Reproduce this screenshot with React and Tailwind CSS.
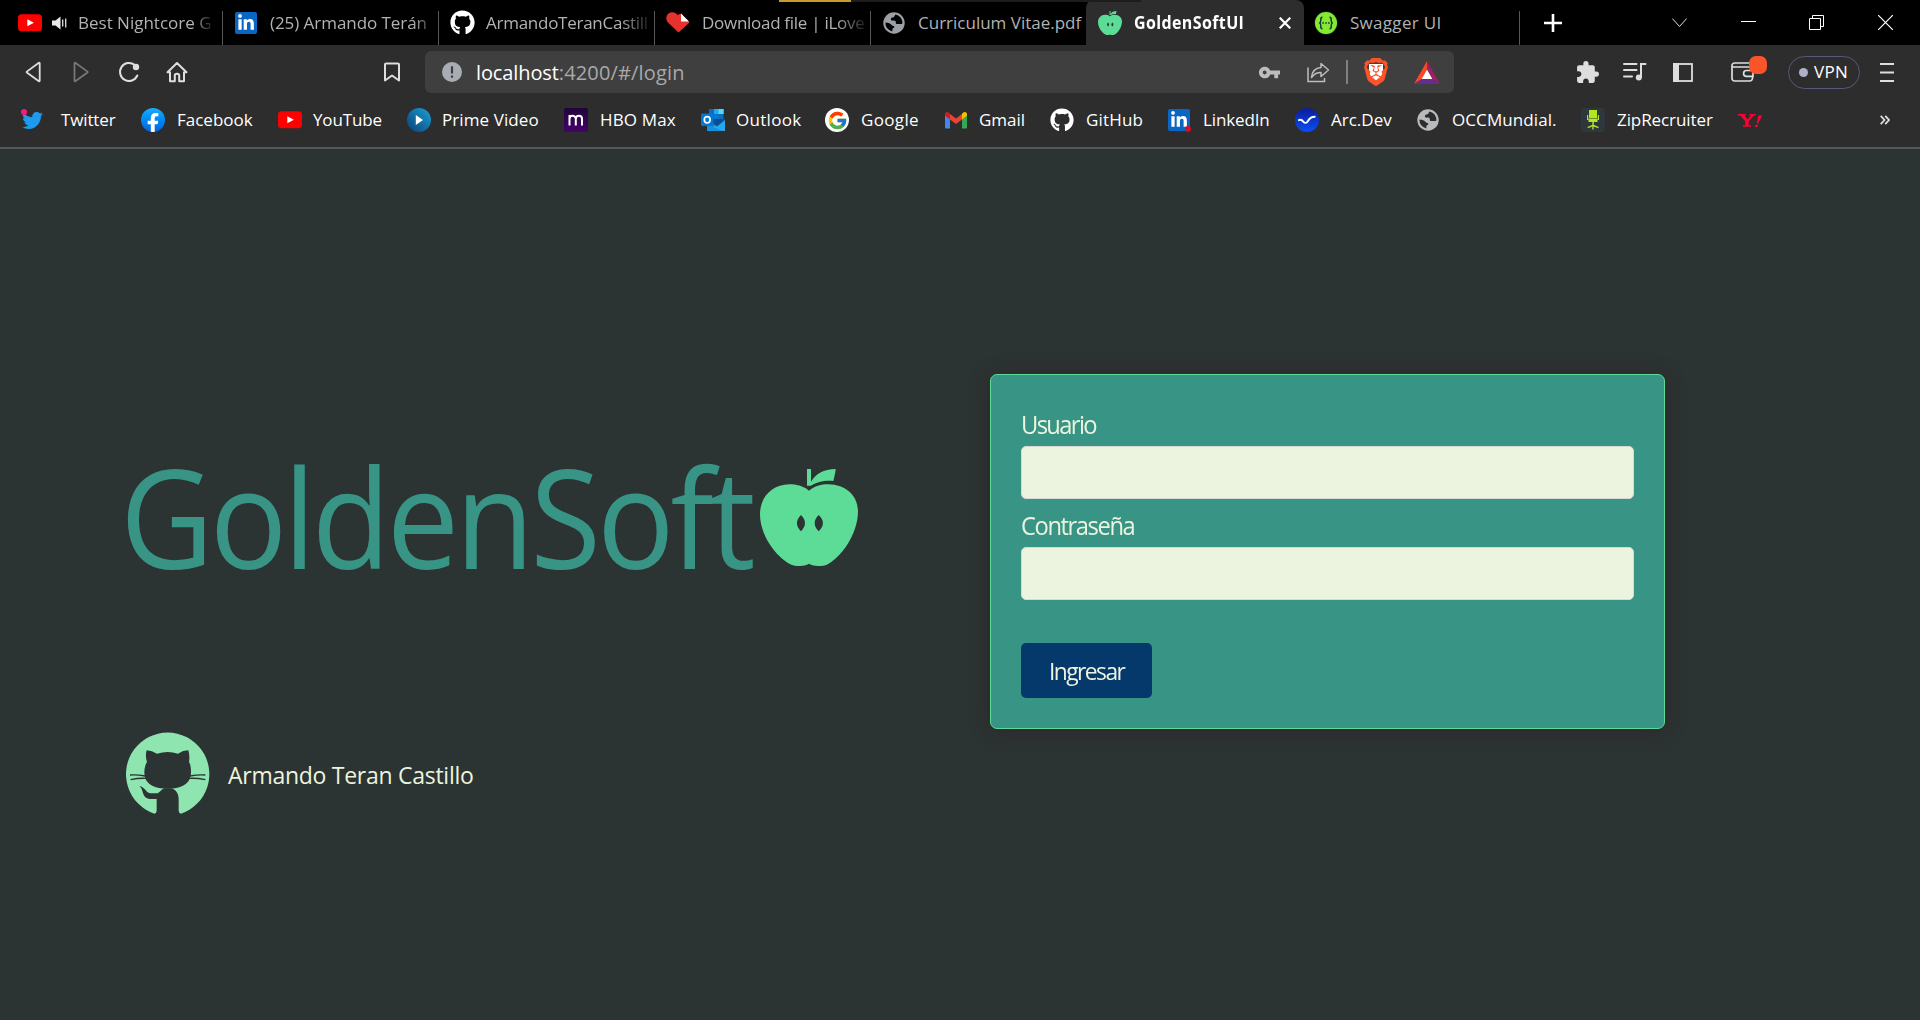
import { useLayoutEffect, useRef, useState } from "react";
import { FaGithub, FaLinkedinIn, FaFacebookF, FaTwitter } from "react-icons/fa";
import { FcGoogle } from "react-icons/fc";
import { SiBrave } from "react-icons/si";
import { MdExtension, MdVpnKey } from "react-icons/md";

/* Text whose tracking is adjusted so that it fills a given width; `s` condenses the glyphs. */
function Fit({ w, s = 1, className = "", children }) {
  const ref = useRef(null);
  const [spacing, setSpacing] = useState(0);
  useLayoutEffect(() => {
    const width = ref.current.offsetWidth;
    setSpacing((w / s - width) / String(children).length);
  }, []);
  const condensed = s === 1 ? {} : { transform: `scaleX(${s})`, marginRight: w - w / s };
  return (
    <span ref={ref} className={`inline-block origin-left whitespace-pre ${className}`} style={{ letterSpacing: spacing, ...condensed }}>
      {children}
    </span>
  );
}

/* ---------- brand icons ---------- */
const YouTube = () => (
  <svg width="24" height="24" viewBox="0 0 24 24">
    <rect x="0" y="3.3" width="24" height="17" rx="3.6" fill="#f00" />
    <path d="M9.3 8.3v7l6.6-3.5z" fill="#fff" />
  </svg>
);
const LinkedIn = ({ dot }) => (
  <span className="relative grid h-[22px] w-[22px] place-items-center rounded-[2px] bg-[#0a66c2] text-white">
    <FaLinkedinIn size={18} />
    {dot && <span className="absolute -bottom-px -right-px h-1.5 w-1.5 rounded-full bg-[#d11124]" />}
  </span>
);
const Globe = ({ color = "#9aa0a6", hole = "#000" }) => (
  <svg width="22" height="22" viewBox="0 0 22 22">
    <circle cx="11" cy="11" r="10.7" fill={color} />
    <path d="M12.7 2.4c-1.5 1-.7 2.1-2.2 2.8-1.4.6-2.4.4-2.6 1.9-.2 1.3 1 1.7 2.6 1.5 1.8-.2 2.4.7 2.3 2.2 0 1.4 1.2 1.3 2.4 1.2 1.8-.2 2.6.4 4.1-.2A8.6 8.6 0 0 0 12.7 2.4z" fill={hole} />
    <path d="M2.4 10.5c1.8.2 3.4.3 4.8 1.2 1.5 1 1.7 2 3.4 2.4 1.3.4 1 1.6-.2 2-1.2.3-1 1.400-1 3.300A8.600 8.600 0 0 1 2.400 10.500z" fill={hole} />
  </svg>
);
const Apple = ({ hole, w, h }) => (
  <svg width={w} height={h} viewBox="780 87 294 291" preserveAspectRatio="none" className="shrink-0">
    <path d="M927 152C908 137 889 133 868 133C815 134 780 172 780 223C780 290 834 356 876 375C891 380 913 379 927 371C941 379 963 380 979 375C1021 355 1074 285 1074 213C1073 166 1037 134 985 133C963 133 944 138 927 152Z" fill="#5cdc96" />
    <path d="M921 87H933V125C947 102 970 87 1007 87L1006 97L1000 123C970 121 952 127 933 137H921Z" fill="#5cdc96" />
    <path d="M903 225C919 241 919 258 903 274C887 258 887 241 903 225ZM956 225C973 241 973 258 956 274C940 258 940 241 956 225Z" fill={hole} />
  </svg>
);
const Heart = () => (
  <svg width="24" height="21" viewBox="0 0 24 21">
    <path d="M12.500 20.500L2 10.500C-.5 8 0 3.500 2.500 1.600 5.500-.6 9.500.2 11.500 3L15 1.500l8.500 9z" fill="#e5322d" />
    <path d="M15 1.500V9.500h8z" fill="#fff" />
  </svg>
);
const Swagger = () => (
  <svg width="24" height="24" viewBox="0 0 24 24">
    <circle cx="12" cy="12" r="11.500" fill="#173647" />
    <circle cx="12" cy="12" r="11" fill="#85ea2d" />
    <path d="M8.500 6.300C6.500 6.300 6.800 8 6.800 9.500S6.300 11.800 5.300 12c1 .2 1.500 1 1.500 2.500s-.3 3.200 1.700 3.200M15.500 6.300c2 0 1.700 1.700 1.700 3.200s.5 2.300 1.500 2.500c-1 .2-1.500 1-1.500 2.500s.3 3.200-1.700 3.200" fill="none" stroke="#173647" strokeWidth="1.500" />
    <path d="M8.300 12h1.600M11.200 12h1.600M14.100 12h1.600" stroke="#173647" strokeWidth="1.600" />
  </svg>
);
const Twitter = () => (
  <span className="relative block h-6 w-6 pt-[2px]">
    <FaTwitter size={21} className="ml-[2px] text-[#1d9bf0]" />
    <span className="absolute left-px top-[1px] h-1.5 w-1.5 rounded-full bg-[#f9197f]" />
  </span>
);
const Facebook = () => (
  <span className="flex h-6 w-6 items-end justify-center overflow-hidden rounded-full bg-linear-to-b from-[#19aeff] to-[#0062e0] text-white">
    <FaFacebookF size={20} className="mb-[-1px]" />
  </span>
);
const Prime = () => (
  <span className="grid h-6 w-6 place-items-center rounded-full bg-linear-to-tr from-[#0c3f77] to-[#1fa3d4]">
    <svg width="8" height="10" viewBox="0 0 8 10"><path d="M.8 0v10L8 5z" fill="#fff" /></svg>
  </span>
);
const Hbo = () => (
  <span className="grid h-6 w-6 place-items-center rounded-[2px] bg-linear-to-b from-[#21043a] to-[#43036b]">
    <svg width="16" height="12" viewBox="0 0 16 12">
      <path d="M1.500 11.500V1M1.500 5C1.500 .8 7.800 .8 7.800 5v6.500M7.800 5c0-4.200 6.200-4.200 6.200 0v6.500" fill="none" stroke="#fff" strokeWidth="2" />
    </svg>
  </span>
);
const Outlook = () => (
  <svg width="24" height="22" viewBox="0 0 24 22">
    <path d="M8 0h14.500v10H8z" fill="#0f6cbd" />
    <path d="M13 0h9.500v5H13z" fill="#28a8ea" />
    <path d="M17.500 0h5v5h-5z" fill="#50d9ff" />
    <path d="M13 5h4.500v5H13z" fill="#0078d4" />
    <path d="M6 10l18 0v12H6z" fill="#1490df" />
    <path d="M24 10L12 18l10 4h2z" fill="#28a8ea" />
    <path d="M6 10l10 7.500L24 11v-1z" fill="#0a4f94" />
    <rect x="0" y="4.500" width="12.500" height="12.500" rx="1" fill="#0078d4" />
    <ellipse cx="6.200" cy="10.800" rx="2.900" ry="3.200" fill="none" stroke="#fff" strokeWidth="1.700" />
  </svg>
);
const Google = () => (
  <span className="grid h-6 w-6 place-items-center rounded-full bg-white"><FcGoogle size={21} /></span>
);
const Gmail = () => (
  <svg width="24" height="18" viewBox="0 0 24 18">
    <path d="M1 4v12.500c0 .8.500 1 1 1h4V8z" fill="#4285f4" />
    <path d="M23 4v12.500c0 .8-.5 1-1 1h-4V8z" fill="#34a853" />
    <path d="M6 3l6 4.600L18 3v5.500l-6 4.500-6-4.500z" fill="#ea4335" />
    <path d="M1 3.500C1 .8 3.500 .5 4.700 1.600L6 2.800V8.500L1 4.800z" fill="#c5221f" />
    <path d="M23 3.500c0-2.700-2.500-3-3.700-1.900L18 2.800V8.500l5-3.700z" fill="#fbbc04" />
  </svg>
);
const Arc = () => (
  <span className="grid h-6 w-6 place-items-center rounded-full bg-linear-to-b from-[#0a1a9c] to-[#0a4ff5]">
    <svg width="18" height="10" viewBox="0 0 18 10">
      <path d="M0 5.500c3-1.800 4.500 0 5.500 1.300C6.800 8.300 8.500 8.300 9.600 6.500 11.500 3 14 1.500 17.500 1.800" fill="none" stroke="#fff" strokeWidth="1.900" />
    </svg>
  </span>
);
const Zip = () => (
  <span className="grid h-6 w-6 place-items-center rounded-[3px] bg-[#2d373c]">
    <svg width="12" height="20" viewBox="0 0 12 20">
      <path d="M2 0h8v8H2zM0 5h1.200v5H0zM10.800 5H12v5h-1.200zM1.500 8.500h9V12h-9zM5.300 12h1.500v4H5.300zM.5 17l5-2.200h1.200l5 2.200-.5 1.200-4.500-1.700v3H5.300v-3L1 18.200z" fill="#b2e522" />
    </svg>
  </span>
);
const Yahoo = () => (
  <svg width="24" height="14" viewBox="0 0 24 14" fill="#ff0033" className="ml-px mt-[2px]">
    <path d="M0 0h7.600v1.500H6.500l3.100 4L13 1.500h-1.600V0h6.300v1.500h-1.800L10.700 7.300v4h2.300v1.500H5v-1.500h2.300V7.300L2.300 1.500H0z" />
    <path d="M20.300 1.500h4L20 9.500h-1.200zM17.500 10.700h2.700l-.8 2.300h-2.700z" />
  </svg>
);

/* ---------- tab strip ---------- */
function Tab({ icon, lead = "w-[66px]", pad = "pl-3", w, text, fade, children }) {
  return (
    <div className={`flex h-[45px] w-[216px] shrink-0 items-end ${pad}`}>
      <div className="flex h-full min-w-0 flex-1 items-center">
        <div className={`flex shrink-0 items-center ${lead}`}>{icon}{children}</div>
        <div className={`flex-1 ${fade || ""}`}>
          <Fit w={w}>{text}</Fit>
        </div>
      </div>
      <div className="h-[34px] w-px bg-[#585858]" />
    </div>
  );
}

function TabStrip() {
  return (
    <div className="relative flex h-[45px] items-center bg-black text-[17px] leading-6 text-[#b1b2b4]">
      <div className="absolute left-[779px] top-0 h-0.5 w-[72px] bg-[#c99a2e]" />
      <div className="absolute left-[851px] top-0 h-0.5 w-[290px] bg-[#1d1d1d]" />
      <div className="w-[7px]" />
      <Tab icon={<YouTube />} pad="pl-[11px]" lead="w-[60px]" w={134} text="Best Nightcore G" fade="mask-r-from-80% mask-r-to-95%">
        <svg width="15" height="14" viewBox="0 0 15 14" className="ml-[10px]">
          <path d="M0 4.500h3.500L8.500.5v13L3.500 9.500H0z" fill="#e8e8e8" />
          <path d="M10.700 3.500v7M13.700 2.500v9" stroke="#d0d0d0" strokeWidth="1.400" />
        </svg>
      </Tab>
      <Tab icon={<LinkedIn />} pad="pl-[12px]" lead="w-[35px]" w={157} text="(25) Armando Terán" fade="mask-r-from-85% mask-r-to-100%" />
      <Tab icon={<FaGithub size={25} className="text-white" />} pad="pl-[11px]" lead="w-[36px]" w={162} text="ArmandoTeranCastill" fade="mask-r-from-80% mask-r-to-100%" />
      <Tab icon={<Heart />} pad="pl-[11px]" lead="w-[36px]" w={162} text="Download file | iLove" fade="mask-r-from-80% mask-r-to-100%" />
      <div className="flex h-[45px] w-[215px] shrink-0 items-center pl-[12px]">
        <div className="w-[35px]"><Globe /></div>
        <Fit w={163}>Curriculum Vitae.pdf</Fit>
      </div>
      <div className="flex h-[45px] w-[218px] shrink-0 items-center rounded-t-lg bg-[#2d2d2d] pl-3 font-bold text-white">
        <div className="w-[36px]"><Apple w="24" h="24" hole="#2d2d2d" /></div>
        <Fit w={110} s={0.94}>GoldenSoftUI</Fit>
        <svg width="12" height="12" viewBox="0 0 12 12" className="ml-[35px]">
          <path d="M.7.7l10.600 10.600M11.300.7L.7 11.300" stroke="#fff" strokeWidth="2.200" />
        </svg>
      </div>
      <Tab icon={<Swagger />} pad="pl-[10px]" lead="w-[36px]" w={91} text="Swagger UI" />
      <svg width="18" height="18" viewBox="0 0 18 18" className="ml-[24px] shrink-0">
        <path d="M9 0v18M0 9h18" stroke="#fff" strokeWidth="2.600" />
      </svg>
      <div className="ml-auto flex shrink-0 items-center [&>svg]:mx-[26.850px]">
        <svg width="15" height="15" viewBox="0 0 15 15" fill="none" stroke="#ddd"><path d="M.3 3.500l7.200 8 7.200-8" /></svg>
        <svg width="15" height="15" viewBox="0 0 15 15" fill="none" stroke="#fff"><path d="M0 6.500h15" /></svg>
        <svg width="15" height="15" viewBox="0 0 15 15" fill="none" stroke="#fff"><path d="M.5 3.500h11v11H.5zM3.500 3.500v-3h11v11h-3" /></svg>
        <svg width="15" height="15" viewBox="0 0 15 15" fill="none" stroke="#fff" strokeWidth="1.200"><path d="M0 0l15 15M15 0L0 15" /></svg>
      </div>
    </div>
  );
}

/* ---------- navigation bar ---------- */
function NavBar() {
  return (
    <div className="flex h-[54px] items-center text-[#dedede]">
      <div className="flex pl-[9px] [&>svg]:mx-3 [&>svg]:h-6 [&>svg]:w-6">
        <svg viewBox="0 0 24 24" fill="none" stroke="currentColor" strokeWidth="1.800" strokeLinejoin="round"><path d="M18.700 3v18l-.8.300L5.800 12.400a.5.5 0 0 1 0-.8L17.900 2.700z" /></svg>
        <svg viewBox="0 0 24 24" fill="none" stroke="#777" strokeWidth="1.800" strokeLinejoin="round"><path d="M5.500 3v18l.8.300L18.500 12.400a.5.5 0 0 0 0-.8L6.300 2.700z" /></svg>
        <svg viewBox="0 0 24 24"><path d="M20.300 15.500A9 9 0 1 1 17.500 4.800" fill="none" stroke="currentColor" strokeWidth="2" strokeLinecap="round" /><circle cx="19" cy="7" r="3.200" fill="currentColor" /></svg>
        <svg viewBox="0 0 24 24" fill="none" stroke="currentColor" strokeWidth="2" strokeLinejoin="round"><path d="M12 3L2.500 12.300H5V21.300H9.800V15.500c0-2.500 4.400-2.500 4.400 0V21.300H19V12.300h2.500z" /></svg>
      </div>
      <svg width="18" height="20" viewBox="0 0 18 20" fill="none" stroke="currentColor" strokeWidth="2" strokeLinejoin="round" className="ml-[182px]">
        <path d="M2 2.500a1 1 0 0 1 1-1h12a1 1 0 0 1 1 1V18.500l-7-5-7 5z" />
      </svg>
      <div className="ml-[24px] flex h-[42px] w-[1029px] shrink-0 items-center rounded-[6px] bg-[#3f3f3f] text-[#bdbdbd]">
        <svg width="20" height="20" viewBox="0 0 20 20" className="ml-[17px]">
          <circle cx="10" cy="10" r="10" fill="#a9adb3" />
          <path d="M10 4.200v7.300M10 13.500v2.300" stroke="#3f3f3f" strokeWidth="2.200" />
        </svg>
        <div className="ml-[14px] flex pt-px text-[20px] leading-7 text-[#a9a9ab]">
          <Fit w={83} className="text-white">localhost</Fit>
          <Fit w={126}>:4200/#/login</Fit>
        </div>
        <MdVpnKey size={23} className="ml-auto" />
        <svg width="24" height="24" viewBox="0 0 24 24" fill="none" stroke="currentColor" strokeWidth="1.500" className="ml-[25px]">
          <path d="M2 7.500V21.500H18.500V18" />
          <path d="M15 3.500l7.500 6.500L15 16.500V12.500C11 12.300 8 14 5.500 17.500 6 12 9 8 15 7.500z" strokeLinejoin="round" />
        </svg>
        <div className="ml-[16px] h-6 w-0.5 bg-[#808080]" />
        <span className="relative ml-[14px] grid h-[28px] w-[28px] place-items-center text-[#fb542b]">
          <span className="absolute h-[17px] w-[14px] bg-white" />
          <SiBrave size={28} className="relative" />
        </span>
        <svg width="26" height="23" viewBox="0 0 26 23" className="ml-[24px] mr-[14px]">
          <path d="M13 0L0 23l8-5L13 8z" fill="#ff4724" />
          <path d="M13 0l13 23-8-5L13 8z" fill="#9e1f63" />
          <path d="M0 23h26l-8-5H8z" fill="#662d91" />
          <path d="M13 8.500l5.300 9.500H7.700z" fill="#fff" />
        </svg>
      </div>
      <MdExtension size={25} className="ml-[121px] shrink-0" />
      <svg width="25" height="20" viewBox="0 0 25 20" className="ml-[22px] shrink-0" fill="none" stroke="currentColor" strokeWidth="2" strokeLinecap="round">
        <path d="M2 2h12.500M2 8h12.500M2 14.500h8M19 15V2h4.500" /><circle cx="16.800" cy="15.500" r="3" fill="currentColor" stroke="none" />
      </svg>
      <svg width="20" height="19" viewBox="0 0 20 19" className="ml-[26px] shrink-0">
        <rect x="1" y="1" width="18" height="17" fill="none" stroke="currentColor" strokeWidth="1.800" /><path d="M0 0h6v19H0z" fill="currentColor" />
      </svg>
      <div className="relative ml-[38px] shrink-0">
        <svg width="23" height="20" viewBox="0 0 23 20" fill="none" stroke="currentColor" strokeWidth="1.700">
          <path d="M21.500 9V4.500a3 3 0 0 0-3-3.500H3.500a2.500 2.500 0 0 0-2.500 2.500v13A2.500 2.500 0 0 0 3.500 19h15a3 3 0 0 0 3-3.500V14M1 5h20" />
          <path d="M22 8.500h-6.500a2.900 2.900 0 0 0 0 5.800H22z" />
        </svg>
        <span className="absolute -top-[6px] left-[18px] h-[18px] w-[18px] rounded-[7px] bg-[#fb542b]" />
      </div>
      <div className="ml-[34px] flex h-[33px] w-[72px] shrink-0 items-center rounded-full border border-[#56587a] pl-2.5 text-[17px] leading-6 text-white">
        <span className="mr-1.5 h-[9px] w-[9px] rounded-full bg-[#afb1c8]" />
        <Fit w={34}>VPN</Fit>
      </div>
      <svg width="14" height="19" viewBox="0 0 14 19" className="ml-5 shrink-0"><path d="M0 1h14M0 9.500h14M0 18h14" stroke="currentColor" strokeWidth="2" /></svg>
    </div>
  );
}

/* ---------- bookmarks ---------- */
const bookmarks = [
  { name: "Twitter", icon: <Twitter />, w: 54, cell: "w-[121px]", lead: "w-[41px]" },
  { name: "Facebook", icon: <Facebook />, w: 76, cell: "w-[137px]" },
  { name: "YouTube", icon: <YouTube />, w: 69, cell: "w-[129px]", lead: "w-[35px]" },
  { name: "Prime Video", icon: <Prime />, w: 97, cell: "w-[157px]", lead: "w-[35px]" },
  { name: "HBO Max", icon: <Hbo />, w: 76, cell: "w-[137px]" },
  { name: "Outlook", icon: <Outlook />, w: 65, cell: "w-[124px]", lead: "w-[35px]" },
  { name: "Google", icon: <Google />, w: 58, cell: "w-[119px]" },
  { name: "Gmail", icon: <Gmail />, w: 46, cell: "w-[106px]", lead: "w-[35px]" },
  { name: "GitHub", icon: <FaGithub size={24} className="text-white" />, w: 57, cell: "w-[118px]" },
  { name: "LinkedIn", icon: <LinkedIn dot />, w: 67, cell: "w-[127px]", lead: "w-[35px]" },
  { name: "Arc.Dev", icon: <Arc />, w: 61, cell: "w-[122px]" },
  { name: "OCCMundial.", icon: <Globe color="#b8bbbe" hole="#2d2d2d" />, w: 105, cell: "w-[164px]", lead: "w-[35px]" },
  { name: "ZipRecruiter", icon: <Zip />, w: 96, cell: "w-[156px]" },
];

function BookmarksBar() {
  return (
    <div className="flex h-[50px] items-start border-b-2 border-[#575757] pl-5 text-[17px] leading-6 text-white">
      <div className="mt-[9px] flex h-6 w-full items-center">
        {bookmarks.map((b) => (
          <div key={b.name} className={`flex shrink-0 items-center ${b.cell}`}>
            <div className={`flex shrink-0 items-center ${b.lead || "w-[36px]"}`}>{b.icon}</div>
            <Fit w={b.w}>{b.name}</Fit>
          </div>
        ))}
        <Yahoo />
        <svg width="10" height="10" viewBox="0 0 10 10" className="ml-auto mr-[30px]" fill="none" stroke="#ddd" strokeWidth="1.800">
          <path d="M.7.8L4.500 5 .7 9.200M5.200.8L9 5 5.200 9.200" />
        </svg>
      </div>
    </div>
  );
}

/* ---------- login page ---------- */
const Octocat = () => (
  <svg width="84" height="83" viewBox="79 66 252 249" className="shrink-0">
    <path d="M164 311A125 125 0 1 1 244 311Q237 309 237 302V268C237 252 230 240 216 235H192C185 240 180 246 174 250H152C137 248 136 230 119 229C128 234 127 244 132 254C138 266 148 268 171 267V302Q171 309 164 311Z" fill="#8ee5b0" />
    <path d="M204 126Q220 126 235 131Q250 121 266 121Q271 138 268 156Q274 165 274 186C274 222 246 236 204 236S134 222 134 186Q135 166 142 156Q136 138 141 121Q157 122 172 131Q188 126 204 126Z" fill="#2c3333" />
    <path d="M91 195Q115 194 137 198M93 209Q117 204 138 205M317 195Q293 194 271 198M317 209Q293 204 270 205" fill="none" stroke="#2c3333" strokeWidth="4" />
  </svg>
);

function Field({ label, w }) {
  return (
    <label className="block">
      <span className="block h-[37px] font-[450] leading-[30px]"><Fit w={w} s={0.95}>{label}</Fit></span>
      <input className="block h-[53px] w-full rounded-[5px] border border-[#d5dbd3] bg-[#ecf4df] px-3 outline-none" />
    </label>
  );
}

function LoginPage() {
  return (
    <main className="flex flex-1 items-start bg-[#2c3333] text-[#ecf4df]">
      <section className="w-[990px] pl-[126px] pt-[284px]">
        <div className="flex h-[164px] items-center">
          <h1 className="-ml-[6px] w-[640px] pt-px text-[137px] leading-[164px] text-[#389484]">
            <Fit w={632} s={0.94}>GoldenSoft</Fit>
          </h1>
          <div className="pt-[5px]"><Apple w="98" h="97" hole="#2c3333" /></div>
        </div>
        <div className="mt-[135px] flex items-center">
          <Octocat />
          <span className="ml-[18px] pt-[3px] text-[23px] leading-8"><Fit w={246}>Armando Teran Castillo</Fit></span>
        </div>
      </section>
      <form className="mt-[225px] flex h-[355px] w-[675px] flex-col gap-[11px] rounded-[7px] border border-[#5cdc96] bg-[#389484] px-[30px] pt-[34px] text-[25px] shadow-[0_2px_20px_rgba(46,26,26,0.400)]">
        <Field label="Usuario" w={75} />
        <Field label="Contraseña" w={113} />
        <button type="button" className="mt-8 grid h-[55px] w-[131px] place-items-center rounded-[5px] bg-[#05386b] text-[24px] font-[450] leading-8">
          <Fit w={75} s={0.95}>Ingresar</Fit>
        </button>
      </form>
    </main>
  );
}

export default function App() {
  return (
    <div className="flex h-[1020px] w-[1920px] flex-col overflow-hidden bg-[#2d2d2d] font-['Open_Sans','Noto_Sans',sans-serif]">
      <TabStrip />
      <NavBar />
      <BookmarksBar />
      <LoginPage />
    </div>
  );
}
